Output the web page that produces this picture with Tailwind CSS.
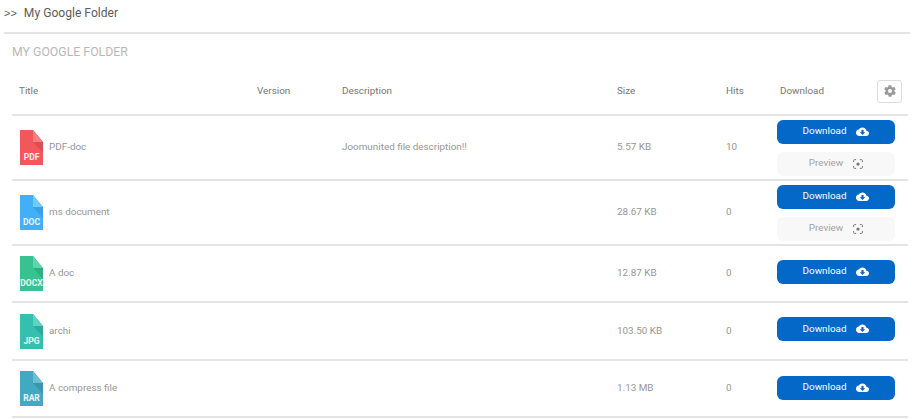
<!DOCTYPE html>
<html lang="en">
<head>
  <meta charset="UTF-8" />
  <title>My Google Folder</title>
  <script src="https://cdn.jsdelivr.net/npm/@tailwindcss/browser@4"></script>
</head>
<body class="bg-white font-['Roboto',sans-serif] h-[419px] overflow-hidden text-[#969696]">

  <svg class="hidden">
    <symbol id="cloud" viewBox="0 0 24 18">
      <path fill-rule="evenodd" d="M19.3 6.8C18.6 3.1 15.6.5 12 .5 9.100.5 6.600 2.100 5.400 4.500 2.300 4.800 0 7.400 0 10.500c0 3.300 2.700 6 6 6h13c2.800 0 5-2.200 5-5 0-2.600-2.100-4.500-4.700-4.700zM17 9.500l-5 5-5-5h3v-4h4v4h3z" fill="currentColor"/>
    </symbol>
    <symbol id="focus" viewBox="0 0 16 16">
      <path d="M1 5V2.500A1.500 1.500 0 0 1 2.500 1H5M11 1h2.500A1.500 1.500 0 0 1 15 2.500V5M15 11v2.500a1.500 1.500 0 0 1-1.500 1.500H11M5 15H2.500A1.500 1.500 0 0 1 1 13.500V11" fill="none" stroke="currentColor" stroke-width="1.600"/>
      <circle cx="8" cy="8" r="2.600" fill="currentColor"/>
    </symbol>
  </svg>

  <div class="flex h-[32px] items-center pl-1 pb-[6px] text-[#5c5c5c]">
    <span class="text-[11px] font-['Liberation_Sans',sans-serif] mr-[7px]">&gt;&gt;</span>
    <span class="text-[12.100px]">My Google Folder</span>
  </div>
  <div class="ml-1 mr-[6px] h-[2px] bg-[#e4e4e4]"></div>

  <h2 class="ml-3 mt-[9px] h-[18px] text-[12.300px] leading-[18px] text-[#b8b8b8]">MY GOOGLE FOLDER</h2>

  <table class="ml-3 mt-[6px] w-[896px] table-fixed border-collapse text-[9.900px]">
    <colgroup>
      <col class="w-[245px]" /><col class="w-[85px]" /><col class="w-[275px]" /><col class="w-[109px]" /><col class="w-[54px]" /><col />
    </colgroup>
    <thead>
      <tr class="h-[48px] border-b-2 border-[#e4e4e4] text-left text-[#757575]">
        <th class="pl-[7px] pt-[1px] font-normal">Title</th>
        <th class="pt-[1px] font-normal">Version</th>
        <th class="pt-[1px] font-normal">Description</th>
        <th class="pt-[1px] font-normal">Size</th>
        <th class="pt-[1px] font-normal">Hits</th>
        <th class="pt-[1px] font-normal">
          <div class="flex items-center justify-between pr-[6px]">
            <span>Download</span>
            <button class="flex h-[23px] w-[25px] items-center justify-center rounded-[3px] border border-[#dcdcdc] bg-white text-[#9a9a9a]">
              <svg class="h-[14px] w-[14px]" viewBox="0 0 24 24"><path fill="currentColor" d="M19.400 13c.1-.3.100-.7.100-1s0-.7-.1-1l2.100-1.600c.2-.2.300-.4.100-.6l-2-3.500c-.1-.2-.4-.3-.6-.2l-2.500 1c-.5-.4-1.100-.7-1.700-1l-.4-2.700c0-.2-.2-.4-.5-.4h-4c-.2 0-.4.200-.5.400l-.4 2.700c-.6.200-1.100.6-1.700 1l-2.500-1c-.2-.1-.5 0-.6.200l-2 3.500c-.1.200-.1.500.1.600L4.600 11c0 .3-.1.700-.1 1s0 .7.100 1l-2.100 1.600c-.2.200-.3.400-.1.600l2 3.500c.1.200.4.300.6.200l2.500-1c.5.400 1.100.7 1.700 1l.4 2.700c0 .2.200.4.500.4h4c.2 0 .4-.2.500-.4l.4-2.700c.6-.2 1.100-.6 1.700-1l2.500 1c.2.100.5 0 .6-.2l2-3.500c.1-.2.100-.5-.1-.6zM12 15.500a3.500 3.500 0 1 1 0-7 3.500 3.500 0 0 1 0 7z"/></svg>
            </button>
          </div>
        </th>
      </tr>
    </thead>
    <tbody>
      <tr class="h-[65px] border-b-2 border-[#e4e4e4]">
        <td class="pl-[8px]">
          <div class="flex items-center gap-[6px]">
            <div class="relative h-[35px] w-[23px] shrink-0">
              <svg class="h-full w-full" viewBox="0 0 23 35"><path fill="#f2575b" d="M0 0h13l10 12v23H0z"/><path fill="#f97c7e" d="M13 0l10 12H13z"/><path fill="#d94f52" d="M13 12h10v11z"/></svg>
              <span class="absolute inset-x-0 bottom-[3px] text-center text-[8.500px] leading-[10px] font-bold text-white/90">PDF</span>
            </div>
            <span>PDF-doc</span>
          </div>
        </td>
        <td></td>
        <td>Joomunited file description!!</td>
        <td>5.57 KB</td>
        <td>10</td>
        <td>
          <div class="flex flex-col gap-[8px] w-[118px] -ml-[3px]">
            <button class="flex h-[24px] items-center justify-center gap-[10px] rounded-[6px] bg-[#0468c8] text-white">Download <svg class="h-[10px] w-[13px]"><use href="#cloud"/></svg></button>
            <button class="flex h-[24px] items-center justify-center gap-[10px] rounded-[6px] bg-[#f8f8f8] text-[#a3a3a3]">Preview <svg class="h-[10px] w-[10px] text-[#777]"><use href="#focus"/></svg></button>
          </div>
        </td>
      </tr>
      <tr class="h-[65px] border-b-2 border-[#e4e4e4]">
        <td class="pl-[8px]">
          <div class="flex items-center gap-[6px]">
            <div class="relative h-[35px] w-[23px] shrink-0">
              <svg class="h-full w-full" viewBox="0 0 23 35"><path fill="#42b0f8" d="M0 0h13l10 12v23H0z"/><path fill="#6fcbfb" d="M13 0l10 12H13z"/><path fill="#3c9fdf" d="M13 12h10v11z"/></svg>
              <span class="absolute inset-x-0 bottom-[3px] text-center text-[8.500px] leading-[10px] font-bold text-white/90">DOC</span>
            </div>
            <span>ms document</span>
          </div>
        </td>
        <td></td>
        <td></td>
        <td>28.67 KB</td>
        <td>0</td>
        <td>
          <div class="flex flex-col gap-[8px] w-[118px] -ml-[3px]">
            <button class="flex h-[24px] items-center justify-center gap-[10px] rounded-[6px] bg-[#0468c8] text-white">Download <svg class="h-[10px] w-[13px]"><use href="#cloud"/></svg></button>
            <button class="flex h-[24px] items-center justify-center gap-[10px] rounded-[6px] bg-[#f8f8f8] text-[#a3a3a3]">Preview <svg class="h-[10px] w-[10px] text-[#777]"><use href="#focus"/></svg></button>
          </div>
        </td>
      </tr>
      <tr class="h-[57px] border-b-2 border-[#e4e4e4]">
        <td class="pl-[8px]">
          <div class="flex items-center gap-[6px]">
            <div class="relative h-[35px] w-[23px] shrink-0">
              <svg class="h-full w-full" viewBox="0 0 23 35"><path fill="#36c391" d="M0 0h13l10 12v23H0z"/><path fill="#62d3ab" d="M13 0l10 12H13z"/><path fill="#31ad82" d="M13 12h10v11z"/></svg>
              <span class="absolute inset-x-0 bottom-[3px] text-center text-[8.500px] leading-[10px] font-bold text-white/90">DOCX</span>
            </div>
            <span>A doc</span>
          </div>
        </td>
        <td></td>
        <td></td>
        <td>12.87 KB</td>
        <td>0</td>
        <td>
          <div class="w-[118px] -ml-[3px] mb-[4px]">
            <button class="flex h-[24px] w-full items-center justify-center gap-[10px] rounded-[6px] bg-[#0468c8] text-white">Download <svg class="h-[10px] w-[13px]"><use href="#cloud"/></svg></button>
          </div>
        </td>
      </tr>
      <tr class="h-[58px] border-b-2 border-[#e4e4e4]">
        <td class="pl-[8px]">
          <div class="flex items-center gap-[6px]">
            <div class="relative h-[35px] w-[23px] shrink-0">
              <svg class="h-full w-full" viewBox="0 0 23 35"><path fill="#33c0ae" d="M0 0h13l10 12v23H0z"/><path fill="#62d1c3" d="M13 0l10 12H13z"/><path fill="#2eab9c" d="M13 12h10v11z"/></svg>
              <span class="absolute inset-x-0 bottom-[3px] text-center text-[8.500px] leading-[10px] font-bold text-white/90">JPG</span>
            </div>
            <span>archi</span>
          </div>
        </td>
        <td></td>
        <td></td>
        <td>103.50 KB</td>
        <td>0</td>
        <td>
          <div class="w-[118px] -ml-[3px] mb-[4px]">
            <button class="flex h-[24px] w-full items-center justify-center gap-[10px] rounded-[6px] bg-[#0468c8] text-white">Download <svg class="h-[10px] w-[13px]"><use href="#cloud"/></svg></button>
          </div>
        </td>
      </tr>
      <tr class="h-[57px] border-b-2 border-[#e4e4e4]">
        <td class="pl-[8px]">
          <div class="flex items-center gap-[6px]">
            <div class="relative h-[35px] w-[23px] shrink-0">
              <svg class="h-full w-full" viewBox="0 0 23 35"><path fill="#43a9c2" d="M0 0h13l10 12v23H0z"/><path fill="#6cbed2" d="M13 0l10 12H13z"/><path fill="#3b96ad" d="M13 12h10v11z"/></svg>
              <span class="absolute inset-x-0 bottom-[3px] text-center text-[8.500px] leading-[10px] font-bold text-white/90">RAR</span>
            </div>
            <span>A compress file</span>
          </div>
        </td>
        <td></td>
        <td></td>
        <td>1.13 MB</td>
        <td>0</td>
        <td>
          <div class="w-[118px] -ml-[3px] mb-[2px]">
            <button class="flex h-[24px] w-full items-center justify-center gap-[10px] rounded-[6px] bg-[#0468c8] text-white">Download <svg class="h-[10px] w-[13px]"><use href="#cloud"/></svg></button>
          </div>
        </td>
      </tr>
    </tbody>
  </table>

</body>
</html>
